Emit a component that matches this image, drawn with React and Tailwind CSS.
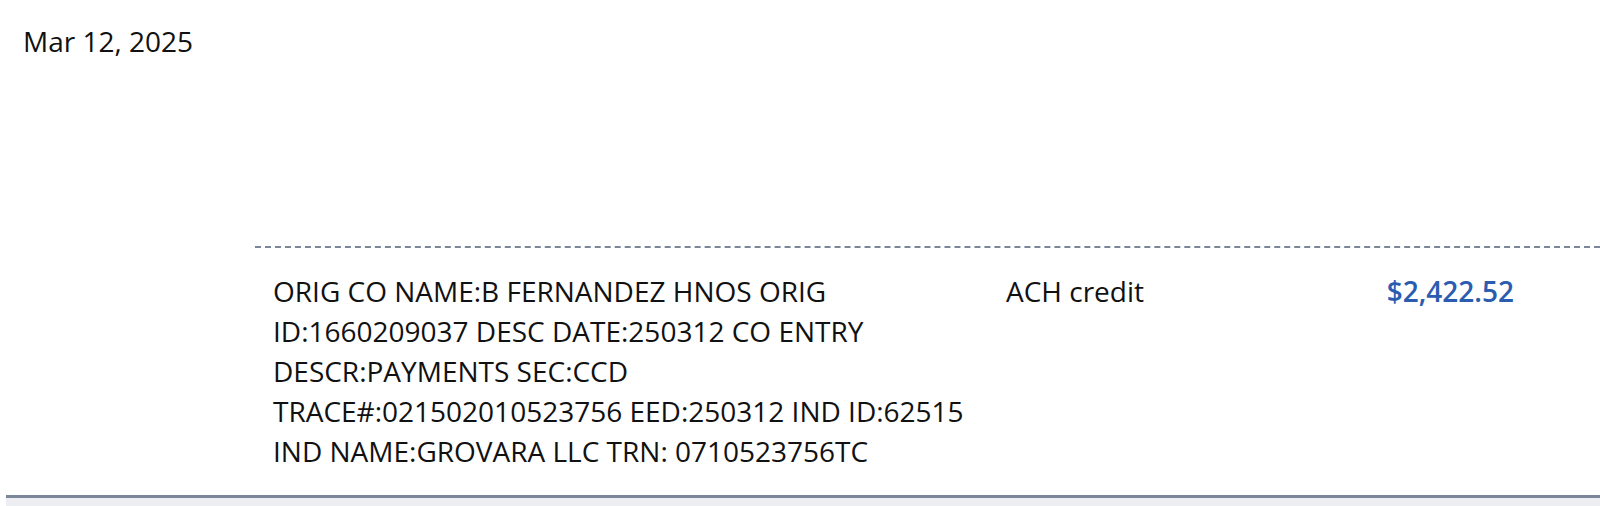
const transaction = {
  date: 'Mar 12, 2025',
  description:
    'ORIG CO NAME:B FERNANDEZ HNOS ORIG ID:1660209037 DESC DATE:250312 CO ENTRY DESCR:PAYMENTS SEC:CCD TRACE#:021502010523756 EED:250312 IND ID:62515 IND NAME:GROVARA LLC TRN: 0710523756TC',
  type: 'ACH credit',
  amount: '$2,422.52',
};

const App = () => {
  return (
    <div className="w-[1600px] h-[506px] bg-white flex flex-col overflow-hidden font-['Open_Sans',sans-serif] text-[28px] leading-[40px] text-[#111]">
      {/* Date heading */}
      <div className="pl-[23px] pt-[21px] h-[246px]">{transaction.date}</div>

      {/* Transaction row */}
      <div className="ml-[255px] grid grid-cols-[735px_275px_264px_1fr] border-t-2 border-dashed border-[#7b8799]">
        <div className="pl-[18px] pr-[14px] pt-[23px] pb-[24px]">{transaction.description}</div>
        <div className="px-4 pt-[23px]">{transaction.type}</div>
        <div className="pl-4 pr-[15px] pt-[23px] text-right font-semibold text-[#2a5cb0]">{transaction.amount}</div>
        <div />
      </div>

      {/* Table footer */}
      <div className="ml-[6px] flex-1 border-t-[3px] border-[#7b8799] bg-[#eceef1]" />
    </div>
  );
};

export default App;
